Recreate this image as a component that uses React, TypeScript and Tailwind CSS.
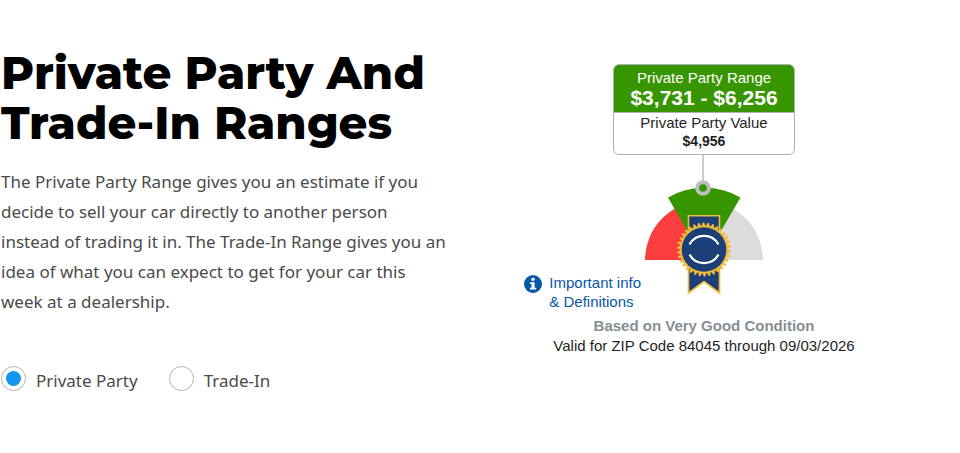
import { useState } from "react";

const body = "font-['Noto_Sans','Open_Sans',sans-serif]";
const arial = "font-['Liberation_Sans',Arial,sans-serif]";

const TEETH = 34;

function teethPoints(cx: number, cy: number, inner: number, outer: number) {
  const points: string[] = [];
  for (let i = 0; i < TEETH; i++) {
    const steps: [number, number][] = [
      [0, inner],
      [0.25, outer],
      [0.55, outer],
      [0.8, inner],
    ];
    for (const [offset, radius] of steps) {
      const angle = ((i + offset) / TEETH) * Math.PI * 2;
      points.push(`${cx + radius * Math.cos(angle)},${cy + radius * Math.sin(angle)}`);
    }
  }
  return points.join(" ");
}

function Gauge() {
  return (
    <svg
      className="block h-[156px] w-[120px]"
      viewBox="0 0 120 156"
      role="img"
      aria-label="Value gauge"
    >
      <path d="M60 105H1A59 59 0 0 1 60 46Z" fill="#fa3e3e" />
      <path d="M60 105H119A59 59 0 0 0 60 46Z" fill="#dcdcdc" />
      <path d="M60 105L24 42.500A73 73 0 0 1 96.500 42.500Z" fill="#379600" />
      <path d="M59 0V26" stroke="#b0b3b5" strokeWidth="1.300" />
      <circle cx="59" cy="33" r="5.800" fill="#379600" stroke="#bcbebc" strokeWidth="4" />
      <path
        d="M44.500 60.700H75.500V138L60 126.500L44.500 138Z"
        fill="#1c3f78"
        stroke="#f1bb3c"
        strokeWidth="1.600"
      />
      <polygon points={teethPoints(60, 94.5, 24, 27)} fill="#f1bb3c" />
      <circle cx="60" cy="94.500" r="22.300" fill="#1c3f78" />
      <path
        d="M45.500 89.500A16.500 16.500 0 0 1 74.500 89.500M45.500 99.500A16.500 16.500 0 0 0 74.500 99.500"
        fill="none"
        stroke="#fff"
        strokeWidth="2.200"
      />
    </svg>
  );
}

function InfoIcon() {
  return (
    <svg className="mt-[2px] h-[18px] w-[18px] shrink-0" viewBox="0 0 18 18" aria-hidden="true">
      <circle cx="9" cy="9" r="9" fill="#0857a6" />
      <circle cx="9" cy="4.300" r="1.700" fill="#fff" />
      <path d="M6 7.200H10.600V12.800H12.200V14.500H6V12.800H7.500V8.900H6Z" fill="#fff" />
    </svg>
  );
}

const options = ["Private Party", "Trade-In"];

export default function App() {
  const [selected, setSelected] = useState(options[0]);

  return (
    <main className="grid grid-cols-2 bg-white pb-12">
      <section className="pt-12 pl-px">
        <h1 className="font-['Montserrat','Inter',sans-serif] text-[45px] leading-[50px] font-extrabold text-black">
          Private Party And
          <br />
          Trade-In Ranges
        </h1>
        <p className={`${body} mt-[19px] max-w-[448px] text-[17px] leading-[30px] text-[#4a4a4a]`}>
          The Private Party Range gives you an estimate if you decide to sell your car directly to
          another person instead of trading it in. The Trade-In Range gives you an idea of what you
          can expect to get for your car this week at a dealership.
        </p>
        <div
          role="radiogroup"
          aria-label="Range type"
          className={`${body} mt-[49px] flex gap-[31px] text-[17px] leading-[30px] text-[#4a4a4a]`}
        >
          {options.map((option) => (
            <div key={option} className="flex gap-[10px]">
              <input
                type="radio"
                name="range"
                id={option}
                value={option}
                checked={selected === option}
                onChange={() => setSelected(option)}
                className="h-[25px] w-[25px] shrink-0 appearance-none rounded-full border border-[#b5b5b5] bg-white bg-clip-content p-[4px] checked:bg-[#1494ee]"
              />
              <label htmlFor={option}>{option}</label>
            </div>
          ))}
        </div>
      </section>

      <section className={`${arial} flex flex-col items-center pt-16 pr-8 text-[15px] text-[#1f1f1f]`}>
        <div className="w-[182px] overflow-hidden rounded-md border border-[#b0b3b5] text-center">
          <div className="bg-[#379600] pt-[3px] pb-[4px] text-white">
            <p className="leading-[20px]">Private Party Range</p>
            <p className="text-[21px] leading-[20px] font-bold">$3,731 - $6,256</p>
          </div>
          <div className="border-t border-[#b0b3b5] pb-[3px]">
            <p className="leading-[19px]">Private Party Value</p>
            <p className="text-[14px] leading-[19px] font-bold">$4,956</p>
          </div>
        </div>
        <div className="grid w-full grid-cols-[1fr_auto_1fr] gap-[3px]">
          <a
            href="#definitions"
            className="flex gap-[7px] self-end justify-self-end leading-[19px] text-[#0857a6]"
          >
            <InfoIcon />
            <span>
              Important info
              <br />
              &amp; Definitions
            </span>
          </a>
          <Gauge />
        </div>
        <p className="mt-[5px] leading-[20px] font-bold text-[#868e96]">
          Based on Very Good Condition
        </p>
        <p className="leading-[20px]">Valid for ZIP Code 84045 through 09/03/2026</p>
      </section>
    </main>
  );
}
